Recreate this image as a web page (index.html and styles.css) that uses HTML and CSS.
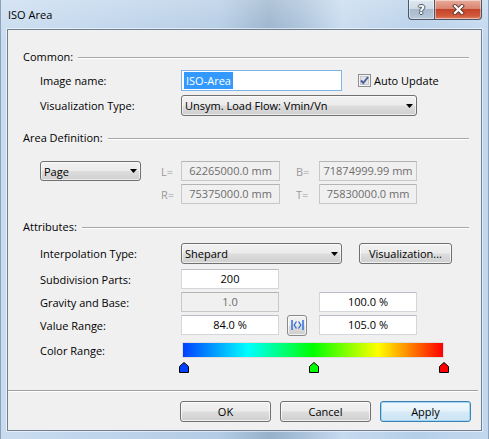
FILE: index.html
```html
<!DOCTYPE html>
<html>
<head>
<meta charset="utf-8">
<title>ISO Area</title>
<link rel="stylesheet" href="styles.css">
</head>
<body>
<div class="window">
  <div class="titlebar">
    <span class="title">ISO Area</span>
    <div class="caption">
      <div class="cap-btn cap-help"><span>?</span></div>
      <div class="cap-btn cap-close">
        <svg width="13" height="11" viewBox="0 0 13 11"><path d="M3 2 L10 9 M10 2 L3 9" stroke="#5a3a33" stroke-width="4" stroke-linecap="square"/><path d="M3 2 L10 9 M10 2 L3 9" stroke="#fff" stroke-width="2.2" stroke-linecap="square"/></svg>
      </div>
    </div>
  </div>
  <div class="client">
    <div class="group-head"><span>Common:</span><i class="rule"></i></div>
    <div class="row r-image">
      <span class="lbl">Image name:</span>
      <div class="field field-focus w161"><span class="sel">ISO-Area</span></div>
      <span class="check"><svg width="13" height="13" viewBox="0 0 13 13"><rect x="0.5" y="0.5" width="12" height="12" fill="#f4f4f4" stroke="#8e8f8f"/><rect x="2.5" y="2.5" width="8" height="8" fill="#e2e4e8" stroke="#c4c7cc"/><path d="M3 6.5 L5.3 9 L10 3" fill="none" stroke="#4a5f97" stroke-width="2"/></svg></span>
      <span class="check-lbl">Auto Update</span>
    </div>
    <div class="row r-vis">
      <span class="lbl">Visualization Type:</span>
      <div class="combo w236"><span>Unsym. Load Flow: Vmin/Vn</span><svg class="arrow" width="7" height="4" viewBox="0 0 7 4"><path d="M0 0 H7 L3.5 4 Z" fill="#000"/></svg></div>
    </div>

    <div class="group-head g-area"><span>Area Definition:</span><i class="rule"></i></div>
    <div class="area-grid">
      <div class="combo page"><span>Page</span><svg class="arrow" width="7" height="4" viewBox="0 0 7 4"><path d="M0 0 H7 L3.5 4 Z" fill="#000"/></svg></div>
      <span class="dlbl l1">L=</span>
      <div class="field disabled">62265000.0 mm</div>
      <span class="dlbl l2">B=</span>
      <div class="field disabled">71874999.99 mm</div>
      <span class="spacer"></span>
      <span class="dlbl l1">R=</span>
      <div class="field disabled">75375000.0 mm</div>
      <span class="dlbl l2">T=</span>
      <div class="field disabled">75830000.0 mm</div>
    </div>

    <div class="group-head g-attr"><span>Attributes:</span><i class="rule"></i></div>
    <div class="row r-interp">
      <span class="lbl">Interpolation Type:</span>
      <div class="combo w161"><span>Shepard</span><svg class="arrow" width="7" height="4" viewBox="0 0 7 4"><path d="M0 0 H7 L3.5 4 Z" fill="#000"/></svg></div>
      <div class="btn btn-vis">Visualization...</div>
    </div>
    <div class="row r-sub">
      <span class="lbl">Subdivision Parts:</span>
      <div class="field num w98">200</div>
    </div>
    <div class="row r-grav">
      <span class="lbl">Gravity and Base:</span>
      <div class="field disabled w98">1.0</div>
      <div class="field num w98 col2">100.0 %</div>
    </div>
    <div class="row r-val">
      <span class="lbl">Value Range:</span>
      <div class="field num w98">84.0 %</div>
      <div class="btn swap"><svg width="13" height="10" viewBox="0 0 13 10"><path d="M1 0 V10 M12 0 V10" stroke="#2f6fd8" stroke-width="1.5"/><path d="M5.5 1.5 L3.2 5 L5.5 8.5 M7.5 1.5 L9.8 5 L7.5 8.5" fill="none" stroke="#2f6fd8" stroke-width="1.3"/></svg></div>
      <div class="field num w98">105.0 %</div>
    </div>
    <div class="row r-color">
      <span class="lbl">Color Range:</span>
      <div class="gradient"></div>
    </div>
    <div class="markers">
      <svg width="10" height="11" viewBox="0 0 10 11"><path d="M0.5 10.5 V4.5 L5 0.5 L9.5 4.5 V10.5 Z" fill="#0040ff" stroke="#000"/></svg>
      <svg width="10" height="11" viewBox="0 0 10 11"><path d="M0.5 10.5 V4.5 L5 0.5 L9.5 4.5 V10.5 Z" fill="#00ff00" stroke="#000"/></svg>
      <svg width="10" height="11" viewBox="0 0 10 11"><path d="M0.5 10.5 V4.5 L5 0.5 L9.5 4.5 V10.5 Z" fill="#ff0000" stroke="#000"/></svg>
    </div>

    <div class="separator"></div>
    <div class="footer">
      <div class="btn dlg">OK</div>
      <div class="btn dlg">Cancel</div>
      <div class="btn dlg default">Apply</div>
    </div>
  </div>
</div>
</body>
</html>
```
FILE: styles.css
```css
* { box-sizing: border-box; }
html, body { margin: 0; padding: 0; }
body {
  width: 489px;
  height: 439px;
  overflow: hidden;
  font-family: "Open Sans", "Noto Sans", sans-serif;
  font-size: 11px;
  color: #000;
  background: #b9d0e8;
}
.window {
  width: 489px;
  height: 439px;
  display: flex;
  flex-direction: column;
  padding: 0 6px 8px 6px;
  background:
    linear-gradient(to bottom, rgba(255,255,255,0.25), rgba(255,255,255,0) 40px),
    linear-gradient(to right, #c9dcef 0%, #bfd5ec 20%, #b3cbe4 45%, #97b1cb 55%, #a9c1da 62%, #c6daee 70%, #b6cfe9 85%, #c2d8ee 100%);
  border-left: 1px solid #8aa2bb;
  border-right: 1px solid #8aa2bb;
}
.titlebar {
  height: 29px;
  display: flex;
  align-items: flex-start;
  flex: none;
}
.title {
  margin-left: 1px;
  padding-top: 6px;
  line-height: 18px;
  font-size: 11px;
}
.caption {
  margin-left: auto;
  display: flex;
  height: 20px;
}
.cap-btn {
  height: 20px;
  display: flex;
  align-items: center;
  justify-content: center;
  border: 1px solid #4b5767;
  border-top: none;
  box-shadow: inset 0 0 0 1px rgba(255,255,255,0.45);
}
.cap-help {
  width: 26px;
  border-right: none;
  border-bottom-left-radius: 4px;
  background: linear-gradient(to bottom, #dde7f1 0%, #cfdbe8 45%, #a9bace 50%, #b8c8da 100%);
}
.cap-help span {
  color: #fff;
  font-family: "DejaVu Sans", sans-serif;
  font-weight: bold;
  font-size: 12px;
  line-height: 14px;
  text-shadow: -1px 0 #4a5566, 1px 0 #4a5566, 0 -1px #4a5566, 0 1px #4a5566;
}
.cap-close {
  width: 48px;
  border-bottom-right-radius: 4px;
  background: linear-gradient(to bottom, #e9ab9b 0%, #d98570 45%, #c4432a 50%, #d45a3c 85%, #e0866a 100%);
}
.client {
  flex: 1;
  display: flex;
  flex-direction: column;
  background: #f0f0f0;
  border: 1px solid #6f7f91;
  box-shadow: 0 0 0 1px rgba(255,255,255,0.55);
  padding-top: 19px;
}
.group-head {
  display: flex;
  align-items: center;
  height: 16px;
  padding-left: 15px;
  padding-right: 12px;
  line-height: 16px;
}
.group-head .rule {
  flex: 1;
  height: 2px;
  margin-left: 5px;
  margin-top: 1px;
  border-top: 1px solid #a7a7a7;
  border-bottom: 1px solid #ffffff;
}
.row {
  display: flex;
  align-items: center;
  padding-left: 32px;
}
.lbl {
  width: 141px;
  flex: none;
}
.r-image { margin-top: 5px; height: 21px; }
.r-vis { margin-top: 4px; height: 21px; }
.g-area { margin-top: 14px; }
.g-attr { margin-top: 15px; }

.field {
  height: 20px;
  border: 1px solid #d3d6db;
  border-top-color: #b9bec6;
  background: #fff;
  display: flex;
  align-items: center;
  justify-content: center;
  line-height: 16px;
  white-space: nowrap;
}
.field-focus {
  height: 21px;
  border-color: #7eb4ea;
  justify-content: flex-start;
  padding-left: 2px;
}
.sel {
  background: #3399ff;
  color: #fff;
  padding: 1px 2px;
  line-height: 15px;
}
.disabled {
  background: #f0f0f0;
  border-color: #c8c8c8;
  border-top-color: #b4b4b4;
  color: #6d6d6d;
}
.w161 { width: 161px; }
.w236 { width: 236px; }
.w98 { width: 98px; }

.check {
  width: 13px;
  height: 13px;
  margin-left: 16px;
  display: flex;
}
.check-lbl { margin-left: 3px; }

.combo {
  height: 21px;
  border: 1px solid #707070;
  border-radius: 3px;
  background: linear-gradient(to bottom, #f2f2f2 0%, #ebebeb 48%, #dddddd 52%, #cfcfcf 100%);
  display: flex;
  align-items: center;
  justify-content: space-between;
  padding-left: 3px;
  padding-right: 3px;
  white-space: nowrap;
  box-shadow: inset 0 0 0 1px rgba(255,255,255,0.6);
}
.arrow { flex: none; }

.area-grid {
  margin-top: 15px;
  display: grid;
  grid-template-columns: 101px 40px 99px 39px 98px;
  grid-template-rows: 20px 20px;
  row-gap: 3px;
  padding-left: 32px;
  align-items: center;
}
.combo.page { height: 20px; }
.area-grid .field { height: 20px; }
.dlbl { color: #9a9a9a; }
.dlbl.l1 { padding-left: 20px; }
.dlbl.l2 { padding-left: 16px; }

.r-interp { margin-top: 8px; height: 21px; }
.r-sub { margin-top: 5px; height: 20px; }
.r-grav { margin-top: 3px; height: 20px; }
.r-val { margin-top: 3px; height: 20px; }
.col2 { margin-left: 40px; }

.btn {
  height: 21px;
  border: 1px solid #707070;
  border-radius: 3px;
  background: linear-gradient(to bottom, #f2f2f2 0%, #ebebeb 48%, #dddddd 52%, #cfcfcf 100%);
  box-shadow: inset 0 0 0 1px rgba(255,255,255,0.7);
  display: flex;
  align-items: center;
  justify-content: center;
  white-space: nowrap;
}
.btn-vis {
  width: 93px;
  margin-left: 17px;
  margin-top: -1px;
}
.swap {
  width: 20px;
  height: 21px;
  margin-left: 8px;
  margin-right: 12px;
  border-color: #8a8a8a;
}

.r-color { margin-top: 7px; height: 16px; }
.gradient {
  width: 262px;
  height: 16px;
  margin-left: 1px;
  border: 1px solid #dedede;
  background: linear-gradient(to right, #0040ff 0%, #00ffff 25%, #00ff00 50%, #ffff00 75%, #ff0000 100%);
}
.markers {
  margin-top: 4px;
  height: 11px;
  margin-left: 171px;
  width: 270px;
  display: flex;
  justify-content: space-between;
}
.markers svg { display: block; }

.separator {
  margin-top: 17px;
  margin-right: 3px;
  height: 2px;
  border-top: 1px solid #a0a0a0;
  border-bottom: 1px solid #ffffff;
}
.footer {
  margin-top: 9px;
  display: flex;
  justify-content: flex-end;
  gap: 9px;
  padding-right: 10px;
}
.btn.dlg { width: 91px; }
.btn.default {
  border-color: #3c7fb1;
  background: linear-gradient(to bottom, #f1f8fd 0%, #e6f2fa 48%, #d6eaf7 52%, #cde4f4 100%);
  box-shadow: inset 0 0 0 1px #9fd7f5;
}
```
